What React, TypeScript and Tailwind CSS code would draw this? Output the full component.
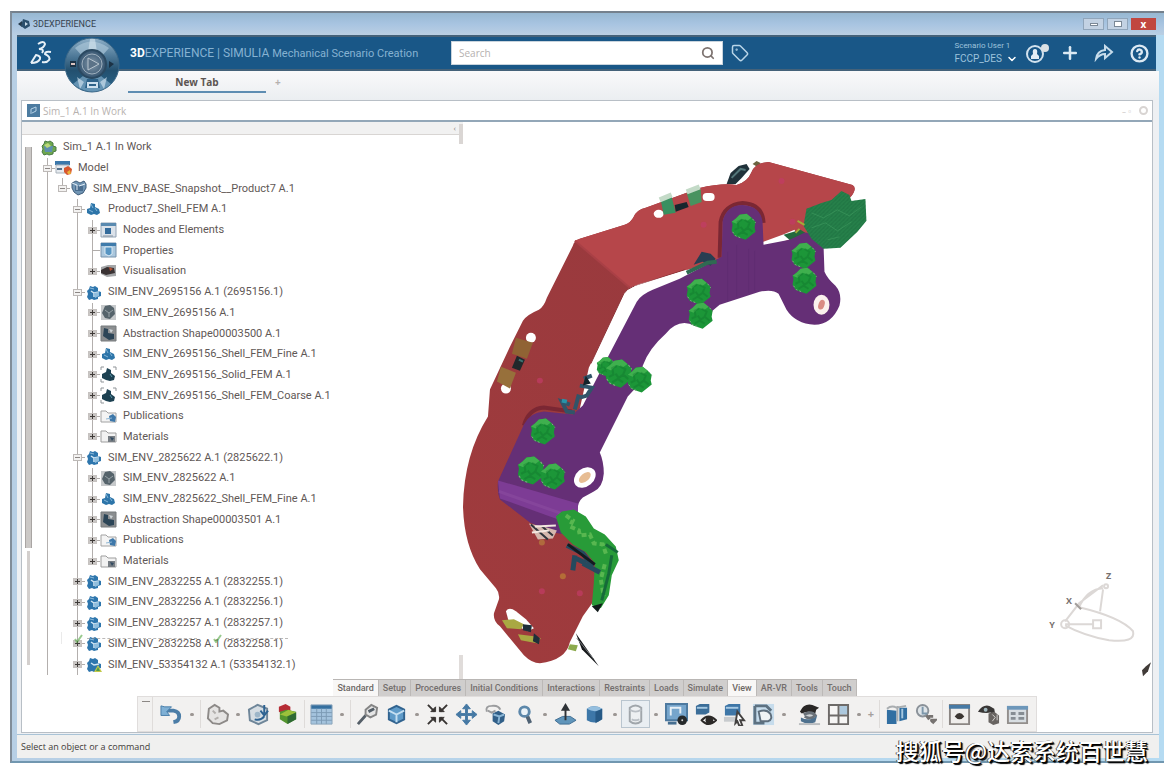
import type { ReactNode } from "react";
import { clsx } from "clsx";
import { ChevronDown, CircleHelp, Plus, Search, Tag } from "lucide-react";

type IconKind =
  | "root"
  | "model"
  | "product"
  | "fem"
  | "nodes"
  | "props"
  | "visual"
  | "part"
  | "grey"
  | "shape"
  | "dark"
  | "folder"
  | "material"
  | "warn";

type Node = {
  label: string;
  depth: number;
  icon: IconKind;
  mark?: "+" | "-";
  last?: boolean;
};

const nodes: Node[] = [
  { label: "Sim_1 A.1 In Work", depth: 0, icon: "root" },
  { label: "Model", depth: 1, icon: "model", mark: "-" },
  { label: "SIM_ENV_BASE_Snapshot__Product7 A.1", depth: 2, icon: "product", mark: "-", last: true },
  { label: "Product7_Shell_FEM A.1", depth: 3, icon: "fem", mark: "-" },
  { label: "Nodes and Elements", depth: 4, icon: "nodes", mark: "+" },
  { label: "Properties", depth: 4, icon: "props" },
  { label: "Visualisation", depth: 4, icon: "visual", mark: "+", last: true },
  { label: "SIM_ENV_2695156 A.1 (2695156.1)", depth: 3, icon: "part", mark: "-" },
  { label: "SIM_ENV_2695156 A.1", depth: 4, icon: "grey", mark: "+" },
  { label: "Abstraction Shape00003500 A.1", depth: 4, icon: "shape", mark: "+" },
  { label: "SIM_ENV_2695156_Shell_FEM_Fine A.1", depth: 4, icon: "fem", mark: "+" },
  { label: "SIM_ENV_2695156_Solid_FEM A.1", depth: 4, icon: "dark", mark: "+" },
  { label: "SIM_ENV_2695156_Shell_FEM_Coarse A.1", depth: 4, icon: "dark", mark: "+" },
  { label: "Publications", depth: 4, icon: "folder", mark: "+" },
  { label: "Materials", depth: 4, icon: "material", mark: "+", last: true },
  { label: "SIM_ENV_2825622 A.1 (2825622.1)", depth: 3, icon: "part", mark: "-" },
  { label: "SIM_ENV_2825622 A.1", depth: 4, icon: "grey", mark: "+" },
  { label: "SIM_ENV_2825622_Shell_FEM_Fine A.1", depth: 4, icon: "fem", mark: "+" },
  { label: "Abstraction Shape00003501 A.1", depth: 4, icon: "shape", mark: "+" },
  { label: "Publications", depth: 4, icon: "folder", mark: "+" },
  { label: "Materials", depth: 4, icon: "material", mark: "+", last: true },
  { label: "SIM_ENV_2832255 A.1 (2832255.1)", depth: 3, icon: "part", mark: "+" },
  { label: "SIM_ENV_2832256 A.1 (2832256.1)", depth: 3, icon: "part", mark: "+" },
  { label: "SIM_ENV_2832257 A.1 (2832257.1)", depth: 3, icon: "part", mark: "+" },
  { label: "SIM_ENV_2832258 A.1 (2832258.1)", depth: 3, icon: "part", mark: "+" },
  { label: "SIM_ENV_53354132 A.1 (53354132.1)", depth: 3, icon: "warn", mark: "+" },
];

const gear = "M5 2l3 1 2-1 3 2v3l3 1v4l-3 1v2l-4 1-2-1-3 1-2-3 1-3-1-3 2-2z";

function TreeIcon({ kind }: { kind: IconKind }) {
  const drawings: Record<IconKind, ReactNode> = {
    root: (
      <>
        <path d={gear} fill="#6fa84e" stroke="#4a7b45" />
        <path d="M4 7h9l-1 6H5z" fill="#5d8fae" />
        <path d="M4 6l4-2 3 3-4 2z" fill="#b9d879" />
      </>
    ),
    model: (
      <>
        <path d="M0 1h15v4H0z" fill="#3b78ab" />
        <path d="M1 5h13v8H1z" fill="#e4e9ee" stroke="#a9b2bb" />
        <path d="M2 9h5" stroke="#53728d" strokeWidth="2" />
        <path d="M9 8l4-2 4 3-1 5-4 1-3-3z" fill="#d8572f" />
        <path d="M12 12l3-2 1 4h-3z" fill="#e8b33b" />
      </>
    ),
    product: (
      <>
        <path d="M2 3l4-2 4 2 4-2 2 3v4l-3 5-5 2-4-3-2-4z" fill="#7195b4" stroke="#3f5d7b" />
        <path d="M5 6h8v5H5z" fill="#4a6d8f" />
        <path d="M2 3l5 2v5M15 4l-6 2" stroke="#e3edf5" fill="none" />
      </>
    ),
    fem: (
      <>
        <path d="M6 2l4 1v3l4 2 1 4-3 2-3-1-3 1-4-2V8l3-1z" fill="#2d75a9" />
        <path d="M6 3l2 4M4 9l4 2M10 7l2 3" stroke="#85b6d8" />
      </>
    ),
    nodes: (
      <>
        <path d="M1 1h15v14H1z" fill="#dbe2ea" stroke="#93a3b4" />
        <path d="M1 1h15v3H1z" fill="#5a8ab0" />
        <path d="M5 6h6v6H5z" fill="#346b9b" />
        <path d="M3 14h10" stroke="#8793a0" />
      </>
    ),
    props: (
      <>
        <path d="M1 1h15v14H1z" fill="#aac7dd" stroke="#7893ac" />
        <path d="M1 1h15v3H1z" fill="#3f7bab" />
        <path d="M5 5h7v7l-3 2-4-2z" fill="#5795c2" stroke="#dceaf4" />
      </>
    ),
    visual: (
      <>
        <path d="M1 4l7-2h8v11l-9 1-6-3z" fill="#a4a6a8" />
        <path d="M1 7l6-3 7 1 1 5-9 2-5-2z" fill="#393233" />
        <path d="M9 4l4 2-3 2z" fill="#bc5132" />
      </>
    ),
    part: (
      <>
        <path d={gear} fill="#2e76ad" />
        <path d="M6 7l3 2 5-1M9 9v4" stroke="#d3e6f3" fill="none" strokeWidth="1.5" />
        <path d="M9 9l5-1v4l-4 2z" fill="#90bedd" />
        <path d="M5 4l4 1" stroke="#8dbbdc" />
      </>
    ),
    grey: (
      <>
        <path d="M1 1h15v15H1z" fill="#c6c9cb" />
        <path d="M5 2l5-1 4 3 1 6-5 5-5-1-3-5z" fill="#55636b" />
        <path d="M5 6l4 3 4-3M9 9v4" stroke="#96a1a6" fill="none" />
      </>
    ),
    shape: (
      <>
        <path d="M1 1h15v15H1z" fill="#8b8e90" stroke="#777a7c" />
        <path d="M4 3l4 1v4l6 1v5l-5 1-6-4z" fill="#2c4557" />
        <path d="M9 4l4 1-2 3z" fill="#cdd3d7" />
      </>
    ),
    dark: (
      <>
        <path d="M1 4V1h3M13 1h3v3M1 13v3h3" stroke="#8f9498" fill="none" />
        <path d="M7 2l4 2v3l4 3-1 4-4 1-4-1-4-2V8l4-2z" fill="#1d4152" />
        <path d="M10 8l2 3" stroke="#5996a9" />
      </>
    ),
    folder: (
      <>
        <path d="M1 3h5l2 2h8v9H1z" fill="#f4f4f4" stroke="#a2a2a2" />
        <path d="M9 8l4-2 3 3-1 5-5-1z" fill="#3e78aa" />
        <path d="M6 11l6-1" stroke="#8fb7d4" />
      </>
    ),
    material: (
      <>
        <path d="M1 3h5l2 2h8v9H1z" fill="#f2f2f2" stroke="#9d9d9d" />
        <path d="M8 8h7v6H8z" fill="#777d83" />
        <path d="M10 9l4 1-2 3z" fill="#334b61" />
      </>
    ),
    warn: (
      <>
        <path d={gear} fill="#2e76ad" />
        <path d="M6 7l3 2 5-1" stroke="#d3e6f3" fill="none" strokeWidth="1.5" />
        <path d="M9 16l4-7 4 7z" fill="#c2c94a" />
        <path d="M11 15l2-4 2 4z" fill="#4f9a4c" />
      </>
    ),
  };
  return (
    <svg viewBox="0 0 17 17" className="h-[17px] w-[17px] shrink-0" aria-hidden="true">
      {drawings[kind]}
    </svg>
  );
}

// one 15px column of the tree's guide lines
function Guide({ line, mark, half }: { line: boolean; mark?: "+" | "-" | "tick"; half?: boolean }) {
  return (
    <span className="relative flex w-[15px] shrink-0 items-center justify-center self-stretch">
      {line && (
        <span
          className={clsx(
            "absolute top-0 left-[7px] w-px bg-[#b3afad]",
            half ? "h-1/2" : "h-full"
          )}
        />
      )}
      {mark && <span className="absolute right-0 left-[7px] h-px bg-[#b0acaa]" />}
      {mark && mark !== "tick" && (
        <button
          type="button"
          aria-label={mark === "+" ? "Expand" : "Collapse"}
          className={clsx(
            "relative h-[7px] w-[9px] border",
            mark === "+"
              ? "border-[#c6c2c0] bg-[#c9c6c4]"
              : "border-[#bdb9b7] bg-[#f3f2f1]"
          )}
        >
          <svg viewBox="0 0 7 5" className="h-[5px] w-[7px]" aria-hidden="true">
            <path
              d={mark === "+" ? "M1 2h5v1H1zM3 0h1v5H3z" : "M1 2h5v1H1z"}
              fill={mark === "+" ? "#3f3b39" : "#8c8785"}
            />
          </svg>
        </button>
      )}
    </span>
  );
}

function TreeRow({ node }: { node: Node }) {
  return (
    <li className="flex min-h-0 flex-1 items-center">
      {node.depth > 1 && <Guide line />}
      {node.depth > 2 && <Guide line={false} />}
      {node.depth > 3 && <Guide line />}
      {node.depth > 0 && <Guide line mark={node.mark ?? "tick"} half={node.last} />}
      <TreeIcon kind={node.icon} />
      <span className="ml-[6px] font-[Roboto,sans-serif] text-[11px] leading-4 whitespace-nowrap text-[#5f5856]">
        {node.label}
      </span>
    </li>
  );
}

function Blob({ x, y, r = 12 }: { x: number; y: number; r?: number }) {
  return (
    <g transform={`translate(${x} ${y}) scale(${r / 12})`}>
      <path
        d="M-4-12L3-13 8-9 12-5 11 1 12 5 7 9 2 13-4 11-9 9-12 4-11-2-12-5-8-8z"
        fill="#1c9638"
      />
      <path d="M-4-12L3-13 8-9 4-6-2-8-7-3-12-5-8-8z" fill="#3fb04e" />
      <path
        d="M-9 3l4-2-1-6 4-2M1-7l5 3-2 5 5 4M-6 8l5-3 5 3M-3 0l3 4 4-3"
        stroke="#0e6f2b"
        strokeWidth="2"
        fill="none"
        opacity="0.35"
      />
      <path d="M-11 5l3 4 5 2M9-8l3 4" stroke="#82a985" strokeDasharray="2 2" fill="none" />
    </g>
  );
}

function ModelView() {
  return (
    <svg
      viewBox="463 122 690 558"
      preserveAspectRatio="xMinYMin meet"
      className="h-full w-full"
      role="img"
      aria-label="Bracket finite element model"
    >
      <defs>
        <linearGradient id="side" x1="0" y1="1" x2="1" y2="0">
          <stop offset="0" stopColor="#a03b3d" />
          <stop offset="1" stopColor="#96393e" />
        </linearGradient>
        <pattern id="mesh" width="4" height="4" patternUnits="userSpaceOnUse">
          <path d="M0 4L4 0M0 0h1" stroke="#145f35" strokeWidth="0.7" opacity="0.6" />
        </pattern>
      </defs>

      {/* dark bolt behind the upper flange */}
      <path d="M727 184l4-11 8-7 8-2 3 5-8 9-6 6z" fill="#20323a" />
      <path d="M732 178l9-9 5 1" stroke="#54777a" strokeWidth="2" fill="none" />
      <path d="M753 164l4-3 4 2-3 4z" fill="#6b6340" />

      {/* red bracket */}
      <path
        d="M573 246Q574 241 580 239L625 225Q631 223 634 217 637 210 646 208L700 188Q722 183 737 185 748 182 752 172 756 163 769 162L853 185Q858 188 852 196L800 240 687 270 636 285Q628 288 624 294L589 368 560 500 600 560 598 578 593 603 583 617 570 643Q566 661 540 664 532 664 524 656L500 627Q493 622 494 614L499 600Q500 594 496 589L480 570Q464 545 463 507 464 455 488 417L490 390 510 347 523 321Q527 315 539 310 544 307 547 298z"
        fill="url(#side)"
      />
      <path
        d="M575 241Q577 240 580 239L625 225Q631 223 634 217 637 210 646 208L700 188Q722 183 737 185 748 182 752 172 756 163 769 162L853 185Q858 188 852 196L800 240 687 270 640 284 630 288z"
        fill="#b6464a"
      />
      <path d="M575 241l55 47" stroke="#a94046" strokeWidth="2" />
      <path d="M591 364l33-70q3-5 9-7l52-17" stroke="#8d3338" fill="none" />

      {/* gaps between both parts */}
      <path d="M590 373l37-78q4-8 12-10l48-15 4 6-40 15q-10 3-15 11l-37 74z" fill="#fff" />
      <path d="M761 243l22-8 12-5 3 7-32 11z" fill="#fff" />
      <path d="M784 235l17-5 8 5-18 6z" fill="#24683d" />

      {/* dark rim round the purple lugs */}
      <path
        d="M720 258l1-36q3-17 22-19 20 1 21 20M524 426q5-17 20-18l28 4"
        stroke="#7b2733"
        strokeWidth="4"
        fill="none"
      />

      {/* purple bracket */}
      <path
        d="M603 367L637 302Q641 295 653 290L680 279 722 257 723 221Q727 205 743 205 761 206 763 222L764 245 790 240 805 233Q820 232 824 244L825 272Q828 279 836 286 843 294 840 306 832 325 815 325 796 324 787 310L779 294Q773 289 760 292L720 305 695 326Q679 318 666 334 649 349 643 366L640 384 628 397 600 453Q604 462 604 474 603 488 594 492L583 498Q577 503 578 513L580 537 553 533 530 523 500 500Q497 493 498 482L524 425Q530 413 544 412L573 415 583 406z"
        fill="#652f76"
      />
      <path d="M498 481l80 23v11l-14 7-64-23z" fill="#7d3c95" />
      <path d="M499 492l68 24" stroke="#8e4fa2" strokeWidth="3" opacity="0.5" />
      <path d="M737 245v52M749 249v44M728 252v50M755 251v40" stroke="#56276a" opacity="0.3" />

      {/* clips along the flanges */}
      <ellipse cx="659" cy="214" rx="5" ry="4" fill="#fff" />
      <rect x="703" y="193" width="12" height="8" rx="4" fill="#fff" />
      <path d="M661 200l11-3 4 16-12 2z" fill="#389060" />
      <path d="M687 193l14-4 1 13-11 4z" fill="#48935f" />
      <path d="M660 200l12-5M687 192l13-5" stroke="#c3dac7" strokeWidth="5" />
      <path d="M675 205l12-3 2 5-13 5z" fill="#17262d" />
      <ellipse cx="531" cy="338" rx="5" ry="5" fill="#fff" />
      <ellipse cx="506" cy="389" rx="5" ry="5" fill="#fff" />
      <path d="M516 338l17 5-6 16-15-5z" fill="#906334" />
      <path d="M501 367l15 6-6 16-13-7z" fill="#97703b" />
      <path d="M517 356l8 4-5 11-8-3z" fill="#20282b" />
      <path d="M519 360l4 2" stroke="#3d7170" strokeWidth="2" />

      {/* dark fasteners */}
      <path d="M702 252l9 2 5 5-5 7-8-4-9 3" fill="#283e52" />
      <path d="M687 273l21-10 9-1" stroke="#2f6a52" strokeWidth="4" fill="none" />
      <path d="M584 379l8-3M580 386l12 2-5 8-7 2M579 395l-4 15M570 405l-8-3 5 10 8 1" stroke="#315469" strokeWidth="4" fill="none" />
      <path d="M586 376l5 8-8 2z" fill="#15242b" />
      <path d="M562 401l5 1" stroke="#2993a9" strokeWidth="4" />

      {/* end mesh */}
      <path
        d="M807 209l15-6 10-3 10-9 8 4 2 6 14-2 1 22-9 11-17 16-17 1-12-10-8-13z"
        fill="#26804a"
      />
      <path
        d="M807 209l15-6 10-3 10-9 8 4 2 6 14-2 1 22-9 11-17 16-17 1-12-10-8-13z"
        fill="url(#mesh)"
      />
      <path d="M812 213l12 5 14-8 12 6 12-9M812 228l14-5 12 8 14-9M828 240l12-3" stroke="#3f9a60" fill="none" opacity="0.6" />
      <path d="M798 221l7 4M800 229l-4 4" stroke="#a3ab38" strokeWidth="2" />

      {/* lower mesh wrapping the corner */}
      <path d="M556 517l6-5 12-2 12 7 8 12 11 6 11 12 3 14-7 15-3 20-8 13-9-3 2-22 1-20-9-11-13-8-12-12z" fill="#289b38" />
      <path d="M566 516l7 5-3 6 9 4 1 5 10-1 4 9 9 1 4 12M605 565l-4 15 3 17" stroke="#58b750" strokeWidth="4" strokeDasharray="5 3" fill="none" />
      <path d="M606 545l12 8M612 556l-3 18-7 27" stroke="#166a39" strokeWidth="3" fill="none" />
      <path d="M567 546l16 8 10 13M574 558l12 6M575 556l-2 15M583 564l17 9" stroke="#254a5e" strokeWidth="5" fill="none" />
      <path d="M568 545l27 20" stroke="#141a20" strokeWidth="3" />
      <path d="M592 607l11-3-5 9z" fill="#111b1b" />

      {/* springs near the fold */}
      <path d="M529 524l18 4 10 3-4 8-15 1z" fill="#d6b8ae" />
      <path d="M531 525l17 15M541 526l12 10" stroke="#30343c" strokeWidth="2" />
      <path d="M535 527l21-1M532 533l17-2" stroke="#f4e7e0" strokeWidth="2" />
      <circle cx="542" cy="543" r="3" fill="#b06a3d" />

      {/* bottom slot */}
      <path d="M506 612q3-5 10 0l10 8 8 9-6 3-19-9z" fill="#fff" />
      <path d="M502 621l12-1 10 5-3 5-14-1zM518 635l16 2 7 2-4 5-16-3z" fill="#a9a842" />
      <path d="M523 625l9 1-1 7-8-2zM534 634l6 5-1 6-6-3z" fill="#1f2f3a" />
      <path d="M570 645l8 1-2 6-8-2z" fill="#8caa4d" />
      <path d="M576 634l23 33-17-17z" fill="#15171a" />
      <path d="M577 639l17 21" stroke="#75797b" />

      {/* lug holes */}
      <ellipse cx="822" cy="305" rx="8" ry="10" fill="#fbf1ed" />
      <ellipse cx="822" cy="305" rx="3" ry="5" fill="#d98c84" transform="rotate(20 822 305)" />
      <ellipse cx="585" cy="478" rx="12" ry="9" fill="#fff" transform="rotate(-40 585 478)" />
      <ellipse cx="585" cy="478" rx="7" ry="4" fill="#e7bd93" transform="rotate(-40 585 478)" />

      <Blob x={744} y={227} />
      <Blob x={804} y={256} />
      <Blob x={805} y={281} />
      <Blob x={699} y={292} />
      <Blob x={701} y={316} />
      <Blob x={606} y={367} r={9} />
      <Blob x={619} y={374} r={13} />
      <Blob x={640} y={380} />
      <Blob x={543} y={432} />
      <Blob x={531} y={471} r={13} />
      <Blob x={553} y={477} />

      <g fill="#c23c66" opacity="0.7">
        <circle cx="782" cy="181" r="3" />
        <circle cx="704" cy="225" r="3" />
        <circle cx="540" cy="381" r="3" />
        <circle cx="793" cy="222" r="3" />
        <circle cx="542" cy="592" r="3" />
        <circle cx="580" cy="594" r="3" />
      </g>
      <circle cx="563" cy="577" r="3" fill="#b46d37" />

      {/* orientation triad */}
      <g fill="none" stroke="#dcd8d6" strokeWidth="2">
        <path d="M1066 625h32M1066 622l14-18 24-18M1080 608q8-18 24-19M1104 590l-3 22" />
        <path d="M1080 608q42 10 54 24 3 12-24 9-26-5-44-15" />
        <circle cx="1066" cy="625" r="4" />
        <circle cx="1107" cy="587" r="2" />
        <path d="M1094 621h8v8h-8z" fill="#fff" />
      </g>
      <path d="M1076 604l6 6" stroke="#a29e9b" strokeWidth="2" />
      <g fill="#77716e" fontFamily="Open Sans, sans-serif" fontSize="9" fontWeight="700">
        <text x="1107" y="580">Z</text>
        <text x="1067" y="605">X</text>
        <text x="1050" y="629">Y</text>
      </g>
      <path d="M1143 671l4-4 5-4-3 9-5 5z" fill="#413b38" />
    </svg>
  );
}

type Tool = { name: string; art: ReactNode; pressed?: boolean };

const cube = "M4 7l8-4 8 4v10l-8 4-8-4z";

const tools: (Tool | "dot" | "sep" | "gap" | "more")[] = [
  {
    name: "Undo",
    art: (
      <>
        <path d="M5 8h9q6 1 6 6 0 5-6 6" stroke="#4b7da7" strokeWidth="4" fill="none" />
        <path d="M1 3v10h9l-3-4 5-5H5z" fill="#7fb0d5" stroke="#477da9" />
      </>
    ),
  },
  "dot",
  "sep",
  {
    name: "Part",
    art: (
      <>
        <path d="M3 6l6-4 5 3v4l4-1 5 4-1 6-8 4-7-1-5-5z" fill="#e5e4e3" stroke="#8d8a88" strokeWidth="2" />
        <path d="M7 8l3 3M9 17l4-2" stroke="#b2afad" strokeWidth="2" />
      </>
    ),
  },
  "dot",
  {
    name: "Update",
    art: (
      <>
        <path d="M2 7l9-5 10 4v12l-9 4-9-4z" fill="#d5dde3" stroke="#6f8699" strokeWidth="2" />
        <path d="M18 2v9M14 8l4 5 4-5M8 17q6 2 10-3" stroke="#2c6292" strokeWidth="2" fill="none" />
        <circle cx="11" cy="12" r="3" fill="#9db6c9" />
      </>
    ),
  },
  {
    name: "Materials",
    art: (
      <>
        <path d="M3 4l7-3 5 3v5l-6 3-6-3z" fill="#b62c35" />
        <path d="M4 9l7-2 10 2v8l-9 5-8-5z" fill="#54952f" />
        <path d="M4 12l7 2 10-4-8-3z" fill="#9cc13b" />
        <path d="M12 14l9-4v7l-9 5z" fill="#2f6a34" />
      </>
    ),
  },
  "sep",
  {
    name: "Table",
    art: (
      <>
        <path d="M1 2h22v20H1z" fill="#a4c3dd" />
        <path d="M1 2h22v4H1z" fill="#356f9f" />
        <path d="M1 10h22M1 14h22M1 18h22M7 6v16M12 6v16M17 6v16" stroke="#7c9bb5" />
        <path d="M1 2h22v20H1z" fill="none" stroke="#8aa4bb" />
      </>
    ),
  },
  "dot",
  "sep",
  {
    name: "Fit all",
    art: (
      <>
        <path d="M10 7l6-5 6 3-1 7-6 3-5-3z" fill="#e5e5e5" stroke="#858585" strokeWidth="2" />
        <path d="M13 9l6-3M10 13l-8 9" stroke="#555f68" strokeWidth="3" />
      </>
    ),
  },
  {
    name: "Iso view",
    art: (
      <>
        <path d={cube} fill="#5f9bc9" stroke="#31638f" strokeWidth="2" />
        <path d="M4 8l8 4 8-4M12 12v8" stroke="#c4dff2" strokeWidth="2" fill="none" />
      </>
    ),
  },
  "dot",
  {
    name: "Fit selection",
    art: (
      <g stroke="#383432" strokeWidth="2" fill="#383432">
        <path d="M2 2l7 7M22 2l-7 7M2 22l7-7M22 22l-7-7" />
        <path d="M5 9h5V4zM19 9h-5V4zM5 15h5v5zM19 15h-5v5z" strokeWidth="1" />
      </g>
    ),
  },
  {
    name: "Pan",
    art: (
      <path d="M12 1l4 5h-3v5h5V8l5 4-5 4v-3h-5v5h3l-4 5-4-5h3v-5H6v3l-5-4 5-4v3h5V6H8z" fill="#4679a4" stroke="#4679a4" />
    ),
  },
  {
    name: "Rotate",
    art: (
      <>
        <path d="M3 9q-2-6 5-6 7-1 9 4M4 8l4 2 4-2" stroke="#9b9c9e" strokeWidth="2" fill="none" />
        <path d="M9 11l6-3 7 4-1 7-6 4-6-4z" fill="#315f88" />
        <path d="M10 12l6 2 5-2M16 14l-1 7" stroke="#8ab5d5" strokeWidth="2" fill="none" />
      </>
    ),
  },
  {
    name: "Zoom",
    art: (
      <>
        <circle cx="12" cy="9" r="5" fill="#eaf2f8" stroke="#5c87aa" strokeWidth="3" />
        <path d="M15 14l3 7" stroke="#4f6274" strokeWidth="4" />
      </>
    ),
  },
  "dot",
  {
    name: "Normal view",
    art: (
      <>
        <path d="M1 18l8-4h8l6 4-7 4H6z" fill="#6095ba" stroke="#3f6d92" />
        <path d="M12 18V5M9 7l3-5 3 5z" stroke="#2e3236" strokeWidth="2" fill="#2e3236" />
      </>
    ),
  },
  {
    name: "Shading",
    art: (
      <>
        <path d="M4 6q7-5 16 0v11q-7 6-16 1z" fill="#3d77a8" />
        <path d="M4 6q7-5 16 0-7 5-16 0z" fill="#95bfdf" />
        <path d="M13 9l7-3v11l-7 4z" fill="#275a86" />
      </>
    ),
  },
  "dot",
  {
    name: "Ambience",
    pressed: true,
    art: (
      <>
        <path d="M6 5q6-5 12 0v14q-6 5-12 0z" fill="#edf0f2" stroke="#a0a6ab" strokeWidth="2" />
        <path d="M6 7q6 4 12 0M8 17q4 2 8 0" stroke="#b9bfc5" fill="none" strokeWidth="2" />
      </>
    ),
  },
  "dot",
  {
    name: "Display settings",
    art: (
      <>
        <path d="M1 1h22v17H1z" fill="#76a5cc" stroke="#4d799f" strokeWidth="2" />
        <path d="M6 13V5h10v6" stroke="#e6eff6" strokeWidth="2" fill="none" />
        <circle cx="18" cy="18" r="5" fill="#26292b" />
        <circle cx="18" cy="18" r="1" fill="#d5d5d5" />
        <path d="M3 21h9" stroke="#466e90" strokeWidth="3" />
      </>
    ),
  },
  {
    name: "Hide or show",
    art: (
      <>
        <path d="M2 3l4-2h10v9l-4 2H2z" fill="#3b6d98" />
        <path d="M3 5h11" stroke="#a5c8e2" strokeWidth="2" />
        <path d="M8 18q7-8 15 0-8 8-15 0z" fill="#fff" stroke="#2c2927" strokeWidth="2" />
        <circle cx="16" cy="18" r="4" fill="#2c2927" />
      </>
    ),
  },
  {
    name: "Swap space",
    art: (
      <>
        <path d="M2 3l4-2h12v10l-4 2H2z" fill="#3e76a7" />
        <path d="M3 5h13" stroke="#a7cae4" strokeWidth="2" />
        <path d="M1 17h12" stroke="#c8cbce" strokeWidth="5" />
        <path d="M15 9l7 9h-4l2 5-3 1-2-5-2 2z" fill="#fff" stroke="#434140" strokeWidth="2" />
      </>
    ),
  },
  {
    name: "Section",
    art: (
      <>
        <path d="M1 1h22v22H1z" fill="#c6dcec" />
        <path d="M3 3h12l5 5M3 3v18h10" stroke="#5d7181" strokeWidth="3" fill="none" />
        <path d="M9 19L7 9q8-3 12 2 3 6-2 8z" fill="#f0f3f4" stroke="#5e6e7c" strokeWidth="2" />
      </>
    ),
  },
  "dot",
  "gap",
  {
    name: "Turntable",
    art: (
      <>
        <path d="M2 9q4-9 13-7l7 3-3 2-1 4q-7-4-14 0z" fill="#292726" />
        <path d="M6 12q8-4 12 1-5 5-11 1" stroke="#6b7279" strokeWidth="3" fill="#cfd3d6" />
        <path d="M3 15q9 5 17-2l-2 7q-8 3-15-1z" fill="#4e718e" />
        <path d="M1 22h22" stroke="#b9bcbf" strokeWidth="2" />
      </>
    ),
  },
  {
    name: "Multi-view",
    art: (
      <>
        <path d="M2 2h20v20H2z" fill="#f6f5f4" />
        <path d="M13 2h9v10h-9z" fill="#acc8dd" />
        <path d="M2 2h20v20H2zM12 2v20M2 13h20" stroke="#6d6a68" strokeWidth="2" fill="none" />
      </>
    ),
  },
  "dot",
  "more",
  "sep",
  {
    name: "Compare",
    art: (
      <>
        <path d="M2 7l10 1v14H2z" fill="#316fa2" />
        <path d="M15 5h8v12l-8 2z" fill="#316fa2" />
        <path d="M2 6q5-4 10-1l10-2M13 3v16" stroke="#a9adb0" strokeWidth="2" fill="none" />
        <path d="M18 6v10" stroke="#a6c8e0" strokeWidth="2" />
      </>
    ),
  },
  {
    name: "Find",
    art: (
      <>
        <circle cx="9" cy="8" r="6" fill="#dee4e8" stroke="#8b9299" strokeWidth="2" />
        <path d="M9 4v7h5" stroke="#7d97ab" fill="none" strokeWidth="2" />
        <path d="M15 14h5M17 18h5l-3 3M13 13l3 4" stroke="#777371" strokeWidth="3" />
      </>
    ),
  },
  "sep",
  {
    name: "Preview",
    art: (
      <>
        <path d="M2 2h20v20H2z" fill="#efedeb" stroke="#8b8683" strokeWidth="2" />
        <path d="M1 2h22v4H1z" fill="#477aa5" />
        <path d="M7 14q5-7 10 0-5 6-10 0z" fill="#3b3531" />
      </>
    ),
  },
  {
    name: "Visibility",
    art: (
      <>
        <path d="M1 9q5-8 12-6l5 3 1 6-5-2q-6 1-13-1z" fill="#393736" />
        <circle cx="9" cy="7" r="2" fill="#a1b7bd" />
        <path d="M12 11l6-2 5 4v8l-6 2-5-3z" fill="#686461" />
        <path d="M16 12l3 3-3 4M21 12v6" stroke="#d8d6d4" fill="none" />
      </>
    ),
  },
  {
    name: "Options",
    art: (
      <>
        <path d="M2 4h20v17H2z" fill="#d8dee2" stroke="#938f8c" strokeWidth="2" />
        <path d="M1 3h22v4H1z" fill="#6d97ba" />
        <path d="M5 11h5M5 16h5M13 11h6M13 16h6" stroke="#868d93" strokeWidth="3" />
      </>
    ),
  },
];

const sections = [
  "Standard",
  "Setup",
  "Procedures",
  "Initial Conditions",
  "Interactions",
  "Restraints",
  "Loads",
  "Simulate",
  "View",
  "AR-VR",
  "Tools",
  "Touch",
];

function ActionBar() {
  return (
    <div className="flex flex-col items-center">
      <div role="tablist" className="ml-4 flex h-[17px] border-t border-[#b9b6b4] bg-[#d0cecd]">
        {sections.map((name) => {
          const active = name === "Standard" || name === "View";
          return (
            <button
              key={name}
              type="button"
              role="tab"
              aria-selected={active}
              className={clsx(
                "border-r border-[#bcb9b7] px-1 font-[Roboto,sans-serif] text-[9px] leading-4 font-medium whitespace-nowrap",
                active ? "bg-[#f8f7f6] text-[#6d6765]" : "text-[#746f6d]"
              )}
            >
              {name}
            </button>
          );
        })}
      </div>
      <div className="flex h-9 items-center border border-[#e0dddc] bg-[#f2f1f0] pr-1 pl-[2px]">
        <span className="mr-1 flex h-full w-[13px] justify-center border-r border-[#dfdcda] pt-1">
          <span className="h-px w-2 bg-[#8c8885]" />
        </span>
        {tools.map((tool, i) => {
          if (tool === "dot")
            return (
              <span key={i} className="flex w-3 justify-center">
                <span className="h-[3px] w-1 rounded-full bg-[#9b9693]" />
              </span>
            );
          if (tool === "sep")
            return <span key={i} className="mx-[2px] h-7 w-px bg-[#dedbd9]" />;
          if (tool === "gap") return <span key={i} className="w-[5px]" />;
          if (tool === "more")
            return (
              <span key={i} className="flex w-3 justify-center text-[11px] font-bold text-[#a5a09d]">
                +
              </span>
            );
          return (
            <button
              key={i}
              type="button"
              aria-label={tool.name}
              className={clsx(
                "flex h-7 w-[29px] items-center justify-center",
                tool.pressed && "border border-[#b9c5cf] bg-[#e9eef2]"
              )}
            >
              <svg viewBox="0 0 24 24" className="h-[23px] w-[23px]" aria-hidden="true">
                {tool.art}
              </svg>
            </button>
          );
        })}
      </div>
    </div>
  );
}

function Compass() {
  return (
    <svg viewBox="0 0 58 58" className="absolute top-0 left-[46px] z-10 h-[58px] w-[58px]" aria-hidden="true">
      <defs>
        <linearGradient id="ring" x1="0" y1="0" x2="0" y2="1">
          <stop offset="0" stopColor="#8fb0c8" />
          <stop offset="0.35" stopColor="#4c7796" />
          <stop offset="0.6" stopColor="#23506f" />
          <stop offset="1" stopColor="#2a678e" />
        </linearGradient>
        <radialGradient id="hub">
          <stop offset="0" stopColor="#8599aa" />
          <stop offset="1" stopColor="#34536f" />
        </radialGradient>
      </defs>
      <circle cx="29" cy="28" r="27" fill="url(#ring)" stroke="#3b6787" />
      <path d="M12 11q16-13 34 0l-8 9q-9-6-18 0z" fill="#a9c4d7" opacity="0.7" />
      <path d="M27 2h5l2 13h-9z" fill="#d9e7f0" opacity="0.6" />
      <path d="M10 47l10-8q9 6 18 0l10 8q-18 15-38 0z" fill="#7fa9c7" opacity="0.7" />
      <path d="M24 42h11l2 9H22z" fill="#2d6289" />
      <path d="M14 40l7 5-4 7zM44 40l-7 5 4 7z" fill="#dcebf5" opacity="0.6" />
      <circle cx="29" cy="27" r="14" fill="url(#hub)" stroke="#2b4961" strokeWidth="2" />
      <circle cx="29" cy="27" r="10" fill="none" stroke="#9fb0be" />
      <path d="M25 21l11 6-11 6z" fill="#5c7388" stroke="#b8c5cf" />
      <path d="M7 24h6v6H7z" fill="#1c3245" />
      <path d="M8 27h4" stroke="#d9c3c0" strokeWidth="2" />
      <path d="M46 24l5 3-5 4z" fill="#1c3245" />
      <path d="M25 46h9v4h-9z" fill="none" stroke="#cde0ee" strokeWidth="2" />
    </svg>
  );
}

function TitleBar() {
  return (
    <div className="flex h-[22px] items-center bg-gradient-to-b from-[#97b8d2] via-[#a8c4e1] to-[#bacfe3] pr-2 pl-[5px]">
      <svg viewBox="0 0 14 12" className="h-3 w-[14px]" aria-hidden="true">
        <path d="M1 6l4-3v6z" fill="#24394a" />
        <path d="M6 1l6 2 1 5-5 3-4-3z" fill="#2b4f6d" />
        <path d="M8 4l3 2-3 2z" fill="#c9dbe9" />
      </svg>
      <h1 className="ml-[2px] font-[Roboto,sans-serif] text-[9px] leading-3 text-[#36424e]">3DEXPERIENCE</h1>
      <div className="ml-auto flex gap-[3px]">
        <button type="button" aria-label="Minimize" className="flex h-[12px] w-[21px] items-center justify-center border border-[#90a5ba] bg-[#c3d2e3]">
          <span className="h-[3px] w-2 border border-[#7b8896] bg-white" />
        </button>
        <button type="button" aria-label="Maximize" className="flex h-[12px] w-[21px] items-center justify-center border border-[#90a5ba] bg-[#c3d2e3]">
          <span className="h-[6px] w-2 border border-[#7b8896] bg-white" />
        </button>
        <button type="button" aria-label="Close" className="flex h-[12px] w-[25px] items-center justify-center bg-[#c14740] text-[10px] leading-none font-bold text-white">
          x
        </button>
      </div>
    </div>
  );
}

function Header() {
  return (
    <header className="relative flex h-9 items-center border-t-2 border-b-2 border-[#456279] bg-[#195787] pr-[7px] pl-3">
      <svg viewBox="0 0 24 26" className="h-[26px] w-6 shrink-0" fill="none" stroke="#e7f0f7" strokeWidth="2" aria-label="3DS">
        <path d="M9 4q6-4 7 0-1 4-6 5 6 0 3 4M2 23l5-8q5 1 4 4-2 4-9 4M22 12q-6-1-6 2 6 3 4 6-2 3-7 2" />
      </svg>
      <Compass />
      <p className="ml-[77px] w-[321px] shrink-0 font-[Roboto,sans-serif] text-[12px] leading-4 whitespace-nowrap text-[#86b2d2]">
        <b className="text-white">3D</b>EXPERIENCE | SIMULIA <span className="text-[11px]">Mechanical Scenario Creation</span>
      </p>
      <label className="flex h-6 w-[272px] items-center border border-[#c9d4dd] bg-white px-[7px]">
        <input
          type="text"
          aria-label="Search"
          placeholder="Search"
          className="min-w-0 flex-1 bg-transparent text-[10px] outline-none placeholder:text-[#b5b1af]"
        />
        <Search className="h-[14px] w-[14px] text-[#7d7370]" strokeWidth={3} />
      </label>
      <button type="button" aria-label="Tags" className="ml-2">
        <Tag className="h-[18px] w-[18px] text-[#b9d5e8]" />
      </button>
      <div className="mr-[6px] ml-auto font-[Roboto,sans-serif] text-[#9dc3dd]">
        <p className="text-[8px] leading-[11px]">Scenario User 1</p>
        <button type="button" className="flex items-center gap-1 text-[10px] leading-4">
          FCCP_DES
          <ChevronDown className="h-3 w-3 text-white" strokeWidth={3} />
        </button>
      </div>
      <div className="flex items-center text-[#dce9f3]">
        <button type="button" aria-label="Profile" className="w-9">
          <svg viewBox="0 0 26 22" className="h-[22px] w-[26px]" aria-hidden="true">
            <circle cx="11" cy="12" r="8" fill="none" stroke="#d2e2ee" strokeWidth="2" />
            <path d="M7 17v-3l2-2q-1-5 2-5t2 5l2 2v3z" fill="#e4eef5" />
            <circle cx="21" cy="6" r="4" fill="#dbe1e4" />
          </svg>
        </button>
        <button type="button" aria-label="Add" className="w-[34px]">
          <Plus className="h-[20px] w-[20px]" strokeWidth={3} />
        </button>
        <button type="button" aria-label="Share" className="w-9">
          <svg viewBox="0 0 20 18" className="h-[18px] w-5" aria-hidden="true">
            <path d="M2 15q1-8 9-9V2l7 6-7 6v-4q-5 0-9 5z" fill="none" stroke="#c7dceb" strokeWidth="2" />
          </svg>
        </button>
        <button type="button" aria-label="Help">
          <CircleHelp className="h-[19px] w-[19px]" strokeWidth={3} />
        </button>
      </div>
    </header>
  );
}

function Check() {
  return (
    <svg viewBox="0 0 9 9" className="h-[9px] w-[9px]" aria-hidden="true">
      <path d="M1 5l2 3 5-7" stroke="#55a844" strokeWidth="2" fill="none" />
    </svg>
  );
}

export default function App() {
  return (
    <div className="flex min-h-screen flex-col bg-white pt-[11px] pr-3 pb-[13px] pl-[10px] font-['Open_Sans',sans-serif]">
      <div className="relative flex flex-1 flex-col border-t-2 border-b-2 border-l-2 border-t-[#75818d] border-b-[#7197b0] border-l-[#818d99] bg-[#b9d9ef]">
        <TitleBar />
        <div className="flex flex-1 flex-col bg-gradient-to-r from-[#b7cfe5] to-[#b5dbf2] pr-[5px] pb-[3px] pl-[5px]">
          <div className="mr-[3px]">
            <Header />
          </div>
          <div className="flex flex-1 flex-col bg-[#eef0f3]">
            <div className="flex h-[29px] items-start bg-gradient-to-b from-[#f9f9fa] to-[#ebeef1] pl-[111px]">
              <button type="button" className="h-[22px] w-[138px] border-b-2 border-[#5e8db2] text-center text-[10px] leading-[22px] font-bold text-[#5c5552]">
                New Tab
              </button>
              <button type="button" aria-label="New tab" className="ml-[9px] text-[10px] leading-[22px] font-bold text-[#b5b1af]">
                +
              </button>
            </div>

            <section className="mr-[6px] ml-1 flex flex-1 flex-col border border-[#b8bfc6] bg-white">
              <div className="flex h-[21px] shrink-0 items-center border-b-2 border-[#93a7b8] pr-1 pl-[5px]">
                <svg viewBox="0 0 13 13" className="h-[13px] w-[13px]" aria-hidden="true">
                  <path d="M0 0h13v13H0z" fill="#4c7ba0" />
                  <path d="M4 10V5l5-2v4L5 9" stroke="#b6d2e6" fill="none" />
                </svg>
                <h2 className="ml-[3px] text-[10px] leading-4 text-[#b8b2af]">Sim_1 A.1 In Work</h2>
                <div className="ml-auto flex items-center gap-2 text-[8px] text-[#c5c0bd]">
                  <span>– ▫</span>
                  <span className="h-[9px] w-[9px] rounded-full border-2 border-[#d8d4d2]" />
                </div>
              </div>

              <div className="flex min-h-0 flex-1">
                <aside className="relative flex w-[441px] shrink-0 flex-col">
                  <div className="flex h-[13px] items-center justify-end border-b border-[#d8d5d3] bg-[#f1f1f1] pr-[7px] text-[8px] text-[#8b8785]">
                    ‹
                  </div>
                  <span className="absolute top-[2px] right-0 h-5 w-1 bg-[#dad6d4]" />
                  <span className="absolute right-0 bottom-0 h-6 w-1 bg-[#e0dcda]" />
                  <div className="flex pt-[2px]">
                    <div className="flex w-[18px] flex-col items-center pt-[10px] pr-[5px]">
                      <span className="h-[401px] w-[7px] border-x border-[#a9a5a3] bg-[#cbc8c6]" />
                      <span className="mt-[3px] h-[114px] w-[3px] bg-[#d3cfcd]" />
                    </div>
                    <ul className="flex h-[538px] flex-1 flex-col">
                      {nodes.map((node, i) => (
                        <TreeRow key={i} node={node} />
                      ))}
                    </ul>
                  </div>
                  {/* faded status strip that floats above the tree */}
                  <div className="absolute bottom-[35px] left-[39px] flex h-3 w-[231px] items-center gap-1 border-l border-[#dddddd] pl-3 opacity-60">
                    <Check />
                    <span className="h-px w-[110px] border-t border-dashed border-[#8f8b89]" />
                    <span className="ml-3">
                      <Check />
                    </span>
                    <span className="h-px w-[62px] border-t border-dashed border-[#8f8b89]" />
                  </div>
                </aside>
                <div className="min-w-0 flex-1">
                  <ModelView />
                </div>
              </div>
              <ActionBar />
            </section>

            <footer className="mt-px flex h-[24px] items-center border-t border-[#a9c3d6] bg-[#f0f0ef] pl-1 text-[9px] leading-4 text-[#3f3b39]">
              Select an object or a command
            </footer>
          </div>
        </div>
        <p className="absolute right-4 bottom-[-4px] font-['Noto_Sans_CJK_SC',sans-serif] text-[23px] leading-[30px] font-medium whitespace-nowrap text-white [text-shadow:1px_1px_0_#000,2px_2px_1px_#000,-1px_0_0_#555]">
          搜狐号@达索系统百世慧
        </p>
      </div>
    </div>
  );
}
